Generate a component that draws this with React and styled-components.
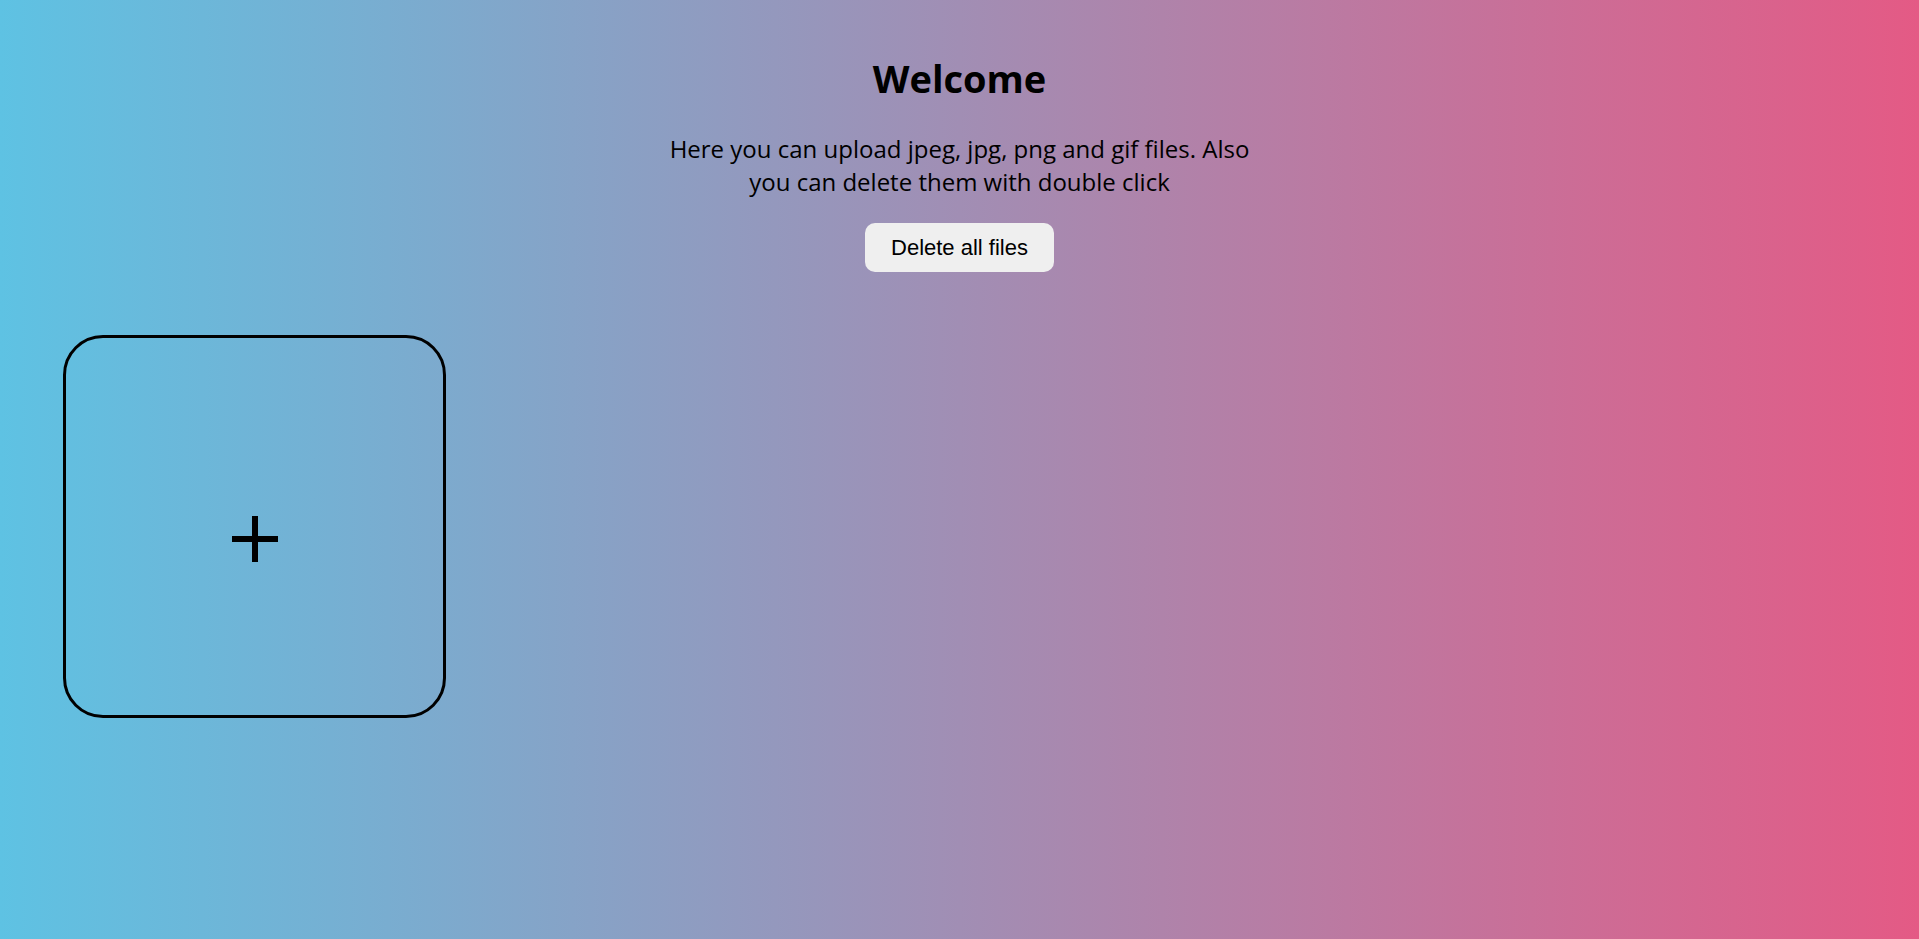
import React from 'react';
import styled, { createGlobalStyle } from 'styled-components';

const GlobalStyle = createGlobalStyle`
  html, body {
    margin: 0;
    padding: 0;
    min-height: 100%;
  }
  body {
    font-family: 'Open Sans', 'Noto Sans', sans-serif;
    color: #000;
  }
`;

const Page = styled.main`
  min-height: 939px;
  background: linear-gradient(to right, #5ec2e3, #e45a85);
  display: flex;
  flex-direction: column;
  box-sizing: border-box;
  padding: 54px 63px;
`;

const Intro = styled.section`
  display: flex;
  flex-direction: column;
  align-items: center;
  text-align: center;
`;

const Title = styled.h1`
  margin: 0;
  font-size: 38px;
  font-weight: 700;
  line-height: 48px;
`;

const Text = styled.p`
  margin: 30px 0 25px;
  max-width: 600px;
  font-size: 24px;
  line-height: 33px;
`;

const DeleteButton = styled.button`
  font-family: 'Liberation Sans', Arial, sans-serif;
  font-size: 22px;
  color: #000;
  background: #efefef;
  border: none;
  border-radius: 10px;
  width: 189px;
  height: 49px;
  padding: 0;
  cursor: pointer;
`;

const Gallery = styled.section`
  display: flex;
  flex-wrap: wrap;
  gap: 40px;
  margin-top: 63px;
`;

const UploadCard = styled.label`
  width: 383px;
  height: 383px;
  box-sizing: border-box;
  border: 3px solid #000;
  border-radius: 40px;
  display: flex;
  align-items: center;
  justify-content: center;
  cursor: pointer;
`;

const PlusIcon = styled.svg`
  width: 46px;
  height: 46px;
  margin-top: 25px;
`;

const App = () => {
  return (
    <>
      <GlobalStyle />
      <Page>
        <Intro>
          <Title>Welcome</Title>
          <Text>
            Here you can upload jpeg, jpg, png and gif files. Also you can delete them with double click
          </Text>
          <DeleteButton>Delete all files</DeleteButton>
        </Intro>
        <Gallery>
          <UploadCard title="Upload">
            <PlusIcon viewBox="0 0 46 46" aria-hidden="true">
              <path d="M0 23H46M23 0V46" stroke="#000" strokeWidth="6" fill="none" />
            </PlusIcon>
          </UploadCard>
        </Gallery>
      </Page>
    </>
  );
};

export default App;
